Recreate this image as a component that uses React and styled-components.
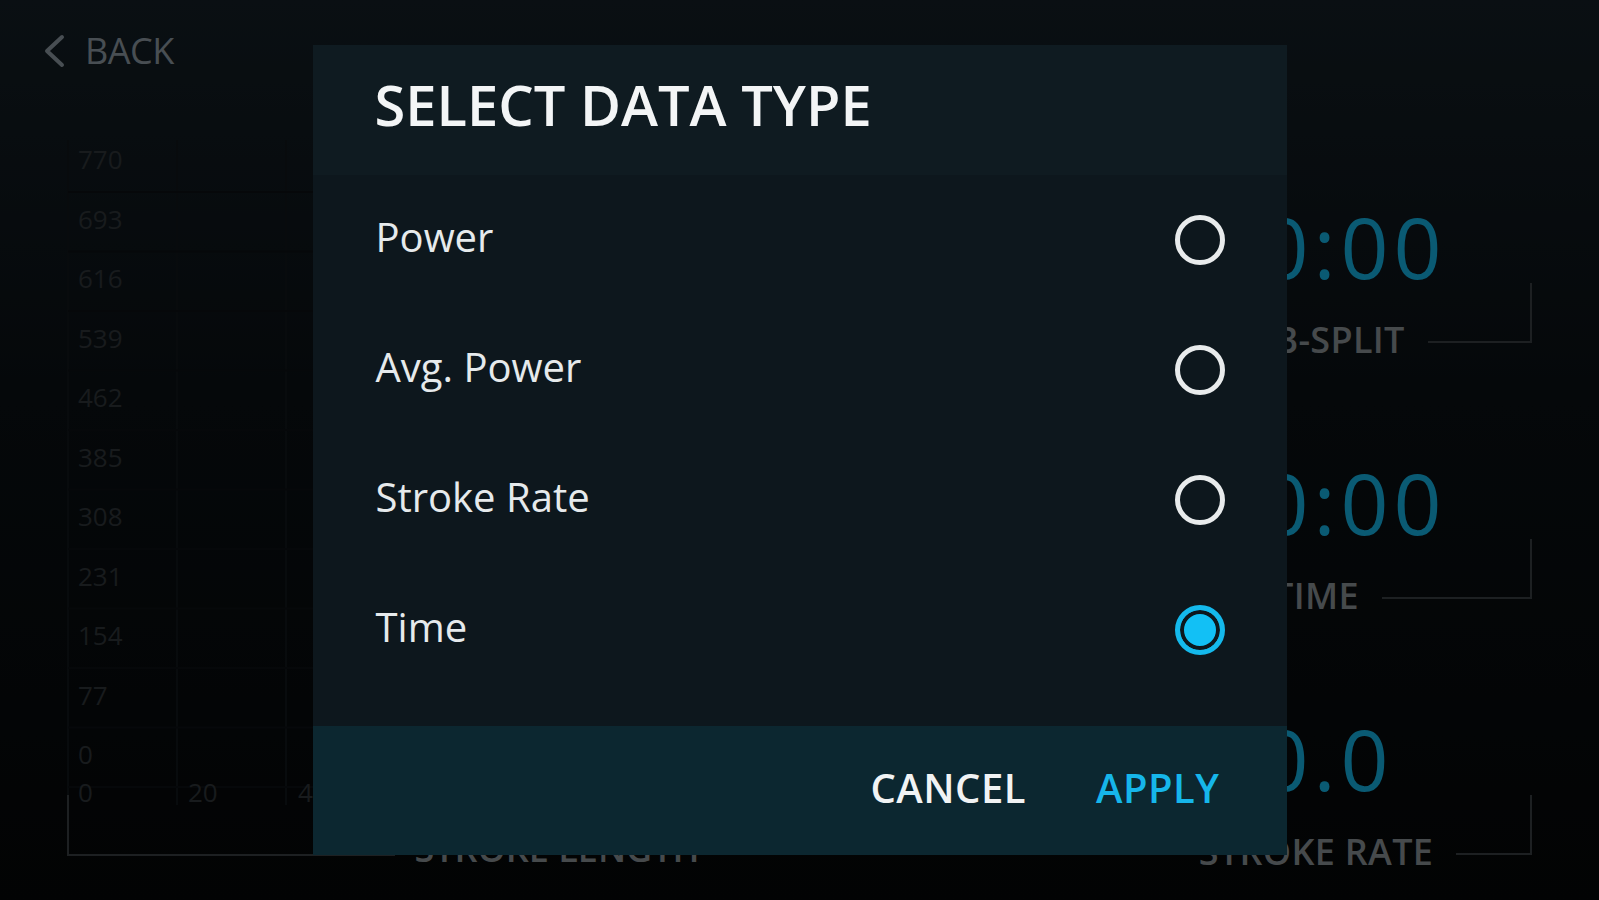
import React from 'react';
import styled, { createGlobalStyle } from 'styled-components';

const GlobalStyle = createGlobalStyle`
  html, body {
    margin: 0;
    padding: 0;
    height: 100%;
    background: #050708;
    font-family: "Open Sans", "Noto Sans", sans-serif;
    overflow: hidden;
  }
  #root {
    height: 100%;
  }
`;

const Screen = styled.div`
  height: 900px;
  display: grid;
  grid-template-rows: 100px 1fr;
  background: linear-gradient(180deg, #141f26 0%, #0a1014 45%, #050708 100%);
`;

const TopBar = styled.header`
  display: flex;
  align-items: flex-start;
  padding: 26px 42px 0;
`;

const BackButton = styled.button`
  display: flex;
  align-items: center;
  gap: 19px;
  background: none;
  border: 0;
  padding: 0;
  color: #909da6;
  font-family: inherit;
  font-size: 36px;
  line-height: 50px;
  letter-spacing: -0.5px;
`;

const Content = styled.main`
  display: grid;
  grid-template-columns: 1100px 440px;
`;

const ChartPanel = styled.div`
  position: relative;
`;

const StatsColumn = styled.div`
  display: flex;
  flex-direction: column;
`;

const StatCell = styled.div`
  height: 256px;
  padding-top: 105px;
  box-sizing: border-box;
  display: flex;
  flex-direction: column;
`;

const StatValue = styled.div`
  text-align: center;
  padding-left: 14px;
  color: #14b4e6;
  font-size: 84px;
  line-height: 84px;
  letter-spacing: 5px;
  margin-bottom: 31px;
`;

const LabelRow = styled.div`
  display: grid;
  grid-template-columns: 1fr auto 1fr;
  grid-template-rows: 40px;
  padding-right: 8px;
`;

const StatLabel = styled.span`
  grid-column: 2;
  color: #8c9499;
  font-size: 36px;
  font-weight: 600;
  line-height: 40px;
  letter-spacing: 0.3px;
  white-space: nowrap;
`;

const Bracket = styled.span`
  grid-column: 3;
  align-self: start;
  height: 58px;
  margin: -37px 0 0 23px;
  border-right: 2px solid #3a4145;
  border-bottom: 2px solid #3a4145;
`;

const Overlay = styled.div`
  position: fixed;
  inset: 0;
  background: rgba(0, 0, 0, 0.5);
  display: flex;
  align-items: center;
  justify-content: center;
`;

const Dialog = styled.div`
  width: 974px;
  height: 810px;
  display: flex;
  flex-direction: column;
  background: #0d171d;
`;

const DialogHeader = styled.div`
  height: 130px;
  box-sizing: border-box;
  padding: 21px 62px 0;
  background: #0f1b21;
`;

const Title = styled.h1`
  margin: 0;
  color: #f3f5f6;
  font-size: 56px;
  font-weight: 600;
  line-height: 76px;
`;

const OptionList = styled.div`
  flex: 1;
  display: flex;
  flex-direction: column;
`;

const OptionRow = styled.label`
  height: 130px;
  display: flex;
  align-items: center;
  justify-content: space-between;
  padding: 0 62px 0 63px;
  cursor: pointer;
`;

const OptionText = styled.span`
  color: #e6eaec;
  font-size: 40px;
  line-height: 50px;
  padding-bottom: 7px;
`;

const Radio = styled.span`
  width: 50px;
  height: 50px;
  box-sizing: border-box;
  border-radius: 50%;
  border: 5px solid ${(p) => (p.checked ? '#14b9ec' : '#e8ebec')};
  background: ${(p) => (p.checked ? '#12c0f5' : 'transparent')};
  box-shadow: ${(p) => (p.checked ? 'inset 0 0 0 4px #0d171d' : 'none')};
`;

const DialogFooter = styled.div`
  height: 129px;
  display: flex;
  align-items: center;
  justify-content: flex-end;
  gap: 70px;
  padding: 0 67px 6px 0;
  box-sizing: border-box;
  background: #0c2730;
`;

const FooterButton = styled.button`
  background: none;
  border: 0;
  padding: 0;
  font-family: inherit;
  font-size: 40px;
  font-weight: 600;
  line-height: 56px;
  letter-spacing: 0.5px;
  color: ${(p) => (p.primary ? '#16b6ea' : '#f1f3f4')};
`;

const ChevronLeft = () => (
  <svg width="24" height="34" viewBox="0 0 24 34" fill="none">
    <path d="M20 3 L5 17 L20 31" stroke="#909da6" strokeWidth="4" strokeLinecap="round" strokeLinejoin="round" />
  </svg>
);

const yTicks = [770, 693, 616, 539, 462, 385, 308, 231, 154, 77, 0];
const xTicks = [0, 20, 40, 60, 80, 100];

const StrokeChart = () => (
  <svg width="1100" height="800" viewBox="0 0 1100 800" style={{ display: 'block' }}>
    {[0, 1, 2, 3, 4, 5, 6, 7, 8].map((i) => (
      <line key={'v' + i} x1={68 + 109 * i} y1="40" x2={68 + 109 * i} y2="705" stroke="#11161a" strokeWidth="2" />
    ))}
    {yTicks.map((t, i) => (
      <line key={'h' + t} x1="68" y1={92 + 59.5 * i} x2="1100" y2={92 + 59.5 * i} stroke="#0d1114" strokeWidth="2" />
    ))}
    {yTicks.map((t, i) => (
      <text key={'y' + t} x="78" y={69 + 59.5 * i} fill="#30363a" fontSize="26" fontFamily="Open Sans, sans-serif">
        {t}
      </text>
    ))}
    {xTicks.map((t, i) => (
      <text key={'x' + t} x={78 + 110 * i} y="702" fill="#30363a" fontSize="26" fontFamily="Open Sans, sans-serif">
        {t}
      </text>
    ))}
    <path d="M68 695 V755 H395" fill="none" stroke="#3a4145" strokeWidth="2" />
    <text x="557" y="762" textAnchor="middle" fill="#8c9499" fontSize="36" fontWeight="600" fontFamily="Open Sans, sans-serif">
      STROKE LENGTH
    </text>
  </svg>
);

const stats = [
  { value: '00:00', label: 'SUB-SPLIT' },
  { value: '00:00', label: 'TIME' },
  { value: '0.0', label: 'STROKE RATE' },
];

const options = ['Power', 'Avg. Power', 'Stroke Rate', 'Time'];

export default function App() {
  const selected = 'Time';
  return (
    <>
      <GlobalStyle />
      <Screen>
        <TopBar>
          <BackButton>
            <ChevronLeft />
            BACK
          </BackButton>
        </TopBar>
        <Content>
          <ChartPanel>
            <StrokeChart />
          </ChartPanel>
          <StatsColumn>
            {stats.map((s) => (
              <StatCell key={s.label}>
                <StatValue>{s.value}</StatValue>
                <LabelRow>
                  <StatLabel>{s.label}</StatLabel>
                  <Bracket />
                </LabelRow>
              </StatCell>
            ))}
          </StatsColumn>
        </Content>
      </Screen>
      <Overlay>
        <Dialog>
          <DialogHeader>
            <Title>SELECT DATA TYPE</Title>
          </DialogHeader>
          <OptionList>
            {options.map((o) => (
              <OptionRow key={o}>
                <OptionText>{o}</OptionText>
                <Radio checked={o === selected} />
              </OptionRow>
            ))}
          </OptionList>
          <DialogFooter>
            <FooterButton>CANCEL</FooterButton>
            <FooterButton primary>APPLY</FooterButton>
          </DialogFooter>
        </Dialog>
      </Overlay>
    </>
  );
}
